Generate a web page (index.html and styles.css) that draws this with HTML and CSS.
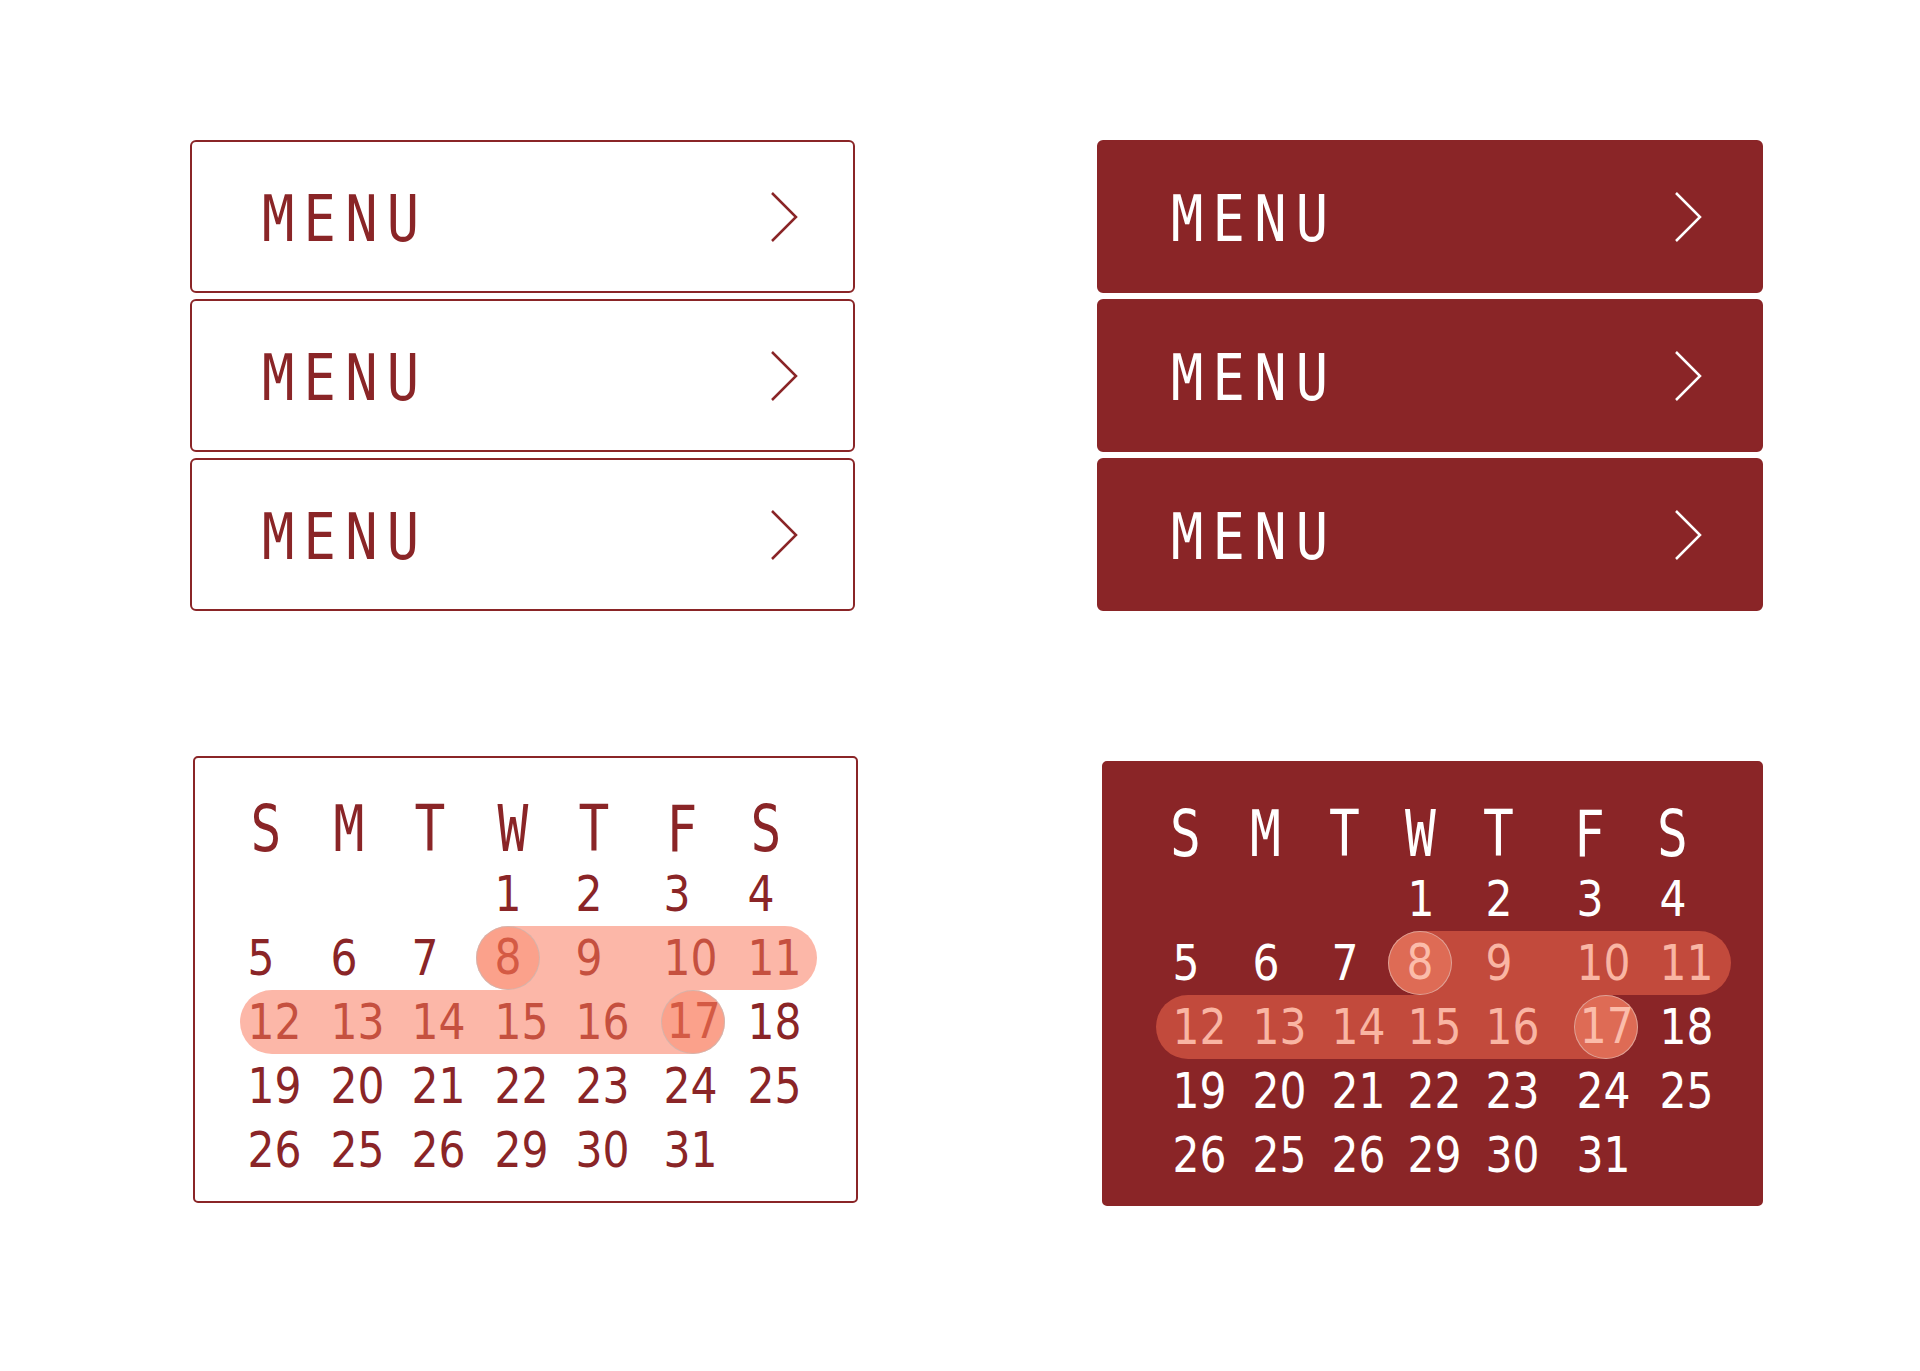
FILE: index.html
```html
<!DOCTYPE html>
<html lang="en">
<head>
    <meta charset="UTF-8">
    <meta name="viewport" content="width=device-width, initial-scale=1.0">
    <title>Menu &amp; Calendar</title>
    <link rel="stylesheet" href="styles.css">
</head>
<body>
    <main class="board">
        <ul class="menu">
            <li class="menu-item">
                <span class="menu-label">MENU</span>
                <svg class="chevron" viewBox="0 0 28 50"><polyline points="2,1 26,25 2,49"/></svg>
            </li>
            <li class="menu-item">
                <span class="menu-label">MENU</span>
                <svg class="chevron" viewBox="0 0 28 50"><polyline points="2,1 26,25 2,49"/></svg>
            </li>
            <li class="menu-item">
                <span class="menu-label">MENU</span>
                <svg class="chevron" viewBox="0 0 28 50"><polyline points="2,1 26,25 2,49"/></svg>
            </li>
        </ul>

        <ul class="menu menu--filled">
            <li class="menu-item">
                <span class="menu-label">MENU</span>
                <svg class="chevron" viewBox="0 0 28 50"><polyline points="2,1 26,25 2,49"/></svg>
            </li>
            <li class="menu-item">
                <span class="menu-label">MENU</span>
                <svg class="chevron" viewBox="0 0 28 50"><polyline points="2,1 26,25 2,49"/></svg>
            </li>
            <li class="menu-item">
                <span class="menu-label">MENU</span>
                <svg class="chevron" viewBox="0 0 28 50"><polyline points="2,1 26,25 2,49"/></svg>
            </li>
        </ul>

        <div class="calendar">
            <div class="cal-grid">
                <div class="cell cell--head">S</div>
                <div class="cell cell--head">M</div>
                <div class="cell cell--head">T</div>
                <div class="cell cell--head">W</div>
                <div class="cell cell--head">T</div>
                <div class="cell cell--head">F</div>
                <div class="cell cell--head">S</div>

                <div class="cell cell--first">1</div>
                <div class="cell">2</div>
                <div class="cell">3</div>
                <div class="cell">4</div>

                <div class="cell">5</div>
                <div class="cell">6</div>
                <div class="cell">7</div>
                <div class="range range--a">
                    <div class="cell cell--mark"><span>8</span></div>
                    <div class="cell">9</div>
                    <div class="cell">10</div>
                    <div class="cell">11</div>
                </div>

                <div class="range range--b">
                    <div class="cell">12</div>
                    <div class="cell">13</div>
                    <div class="cell">14</div>
                    <div class="cell">15</div>
                    <div class="cell">16</div>
                    <div class="cell cell--mark"><span>17</span></div>
                </div>
                <div class="cell">18</div>

                <div class="cell">19</div>
                <div class="cell">20</div>
                <div class="cell">21</div>
                <div class="cell">22</div>
                <div class="cell">23</div>
                <div class="cell">24</div>
                <div class="cell">25</div>

                <div class="cell">26</div>
                <div class="cell">25</div>
                <div class="cell">26</div>
                <div class="cell">29</div>
                <div class="cell">30</div>
                <div class="cell">31</div>
            </div>
        </div>

        <div class="calendar calendar--filled">
            <div class="cal-grid">
                <div class="cell cell--head">S</div>
                <div class="cell cell--head">M</div>
                <div class="cell cell--head">T</div>
                <div class="cell cell--head">W</div>
                <div class="cell cell--head">T</div>
                <div class="cell cell--head">F</div>
                <div class="cell cell--head">S</div>

                <div class="cell cell--first">1</div>
                <div class="cell">2</div>
                <div class="cell">3</div>
                <div class="cell">4</div>

                <div class="cell">5</div>
                <div class="cell">6</div>
                <div class="cell">7</div>
                <div class="range range--a">
                    <div class="cell cell--mark"><span>8</span></div>
                    <div class="cell">9</div>
                    <div class="cell">10</div>
                    <div class="cell">11</div>
                </div>

                <div class="range range--b">
                    <div class="cell">12</div>
                    <div class="cell">13</div>
                    <div class="cell">14</div>
                    <div class="cell">15</div>
                    <div class="cell">16</div>
                    <div class="cell cell--mark"><span>17</span></div>
                </div>
                <div class="cell">18</div>

                <div class="cell">19</div>
                <div class="cell">20</div>
                <div class="cell">21</div>
                <div class="cell">22</div>
                <div class="cell">23</div>
                <div class="cell">24</div>
                <div class="cell">25</div>

                <div class="cell">26</div>
                <div class="cell">25</div>
                <div class="cell">26</div>
                <div class="cell">29</div>
                <div class="cell">30</div>
                <div class="cell">31</div>
            </div>
        </div>
    </main>
</body>
</html>
```

FILE: styles.css
```css
body {
    margin: 0;
    background-color: #fff;
    color: #8a2527;
    font-family: "DejaVu Sans Mono", "Liberation Mono", monospace;
}
.board {
    display: grid;
    grid-template-columns: 665px 666px;
    column-gap: 242px;
    row-gap: 145px;
    align-items: start;
    padding: 140px 0 0 190px;
}

/* menu lists */
.menu {
    list-style: none;
    margin: 0;
    padding: 0;
    display: flex;
    flex-direction: column;
    gap: 6px;
}
.menu-item {
    box-sizing: border-box;
    height: 153px;
    border: 2px solid #8a2527;
    border-radius: 6px;
    display: flex;
    align-items: center;
    justify-content: space-between;
    padding: 0 55px 0 70px;
}
.menu-label {
    display: inline-block;
    font-size: 64px;
    line-height: 1;
    letter-spacing: 11px;
    transform: scaleX(0.84);
    transform-origin: left center;
    margin-top: 4px;
}
.chevron {
    width: 28px;
    height: 50px;
    fill: none;
    stroke: currentColor;
    stroke-width: 2.5;
}
.menu--filled .menu-item {
    background-color: #8a2527;
    color: #fff;
    padding: 0 59px 0 72px;
}

/* calendars */
.calendar {
    box-sizing: border-box;
    width: 665px;
    height: 447px;
    margin-left: 3px;
    border: 2px solid #8a2527;
    border-radius: 5px;
    padding: 38px 0 0 50px;
}
.cal-grid {
    display: grid;
    grid-template-columns: 83px 81px 83px 81px 88px 84px 82px;
    grid-template-rows: 66px;
    grid-auto-rows: 64px;
}
.cell {
    font-family: "DejaVu Sans", "Liberation Sans", sans-serif;
    font-size: 50px;
    line-height: 64px;
    white-space: nowrap;
    padding-left: 3px;
    transform: scaleX(0.85);
    transform-origin: left center;
}
.cell--head {
    font-family: "DejaVu Sans Mono", monospace;
    font-size: 64px;
    line-height: 66px;
    padding-left: 7px;
    transform: scaleX(0.8);
}
.cell--first {
    grid-column-start: 4;
}

/* selected ranges */
.range {
    display: grid;
    border-radius: 32px;
    background-color: rgba(249, 112, 82, 0.5);
    color: #c5503f;
}
.range--a {
    grid-column: 4 / 8;
    margin: 0 10px 0 -16px;
    grid-template-columns: 97px 88px 84px 1fr;
}
.range--b {
    grid-column: 1 / 7;
    margin: 0 20px 0 -5px;
    padding-left: 5px;
    grid-template-columns: 83px 81px 83px 81px 88px 1fr;
}
.cell--mark {
    box-sizing: border-box;
    width: 64px;
    height: 64px;
    padding-left: 0;
    border: 1.5px solid rgba(190, 190, 190, 0.6);
    border-radius: 50%;
    background-color: rgba(250, 140, 110, 0.5);
    text-align: center;
    line-height: 61px;
    transform: none;
    color: #d45a44;
}
.cell--mark span {
    display: inline-block;
    transform: scaleX(0.85);
}

.calendar--filled {
    width: 661px;
    height: 445px;
    margin: 5px 0 0 5px;
    background-color: #8a2527;
    color: #fff;
    padding-left: 66px;
}
.calendar--filled .cal-grid {
    grid-template-columns: 80px 79px 76px 78px 91px 83px 82px;
}
.calendar--filled .cell--head {
    padding-left: 0;
}
.calendar--filled .range {
    color: #f9b5a3;
}
.calendar--filled .range--a {
    margin: 0 8px 0 -17px;
    grid-template-columns: 95px 91px 83px 1fr;
}
.calendar--filled .range--b {
    margin: 0 19px 0 -14px;
    padding-left: 14px;
    grid-template-columns: 80px 79px 76px 78px 91px 1fr;
}
.calendar--filled .cell--mark {
    border-color: rgba(225, 200, 195, 0.6);
    color: #fbbcaa;
}
```
